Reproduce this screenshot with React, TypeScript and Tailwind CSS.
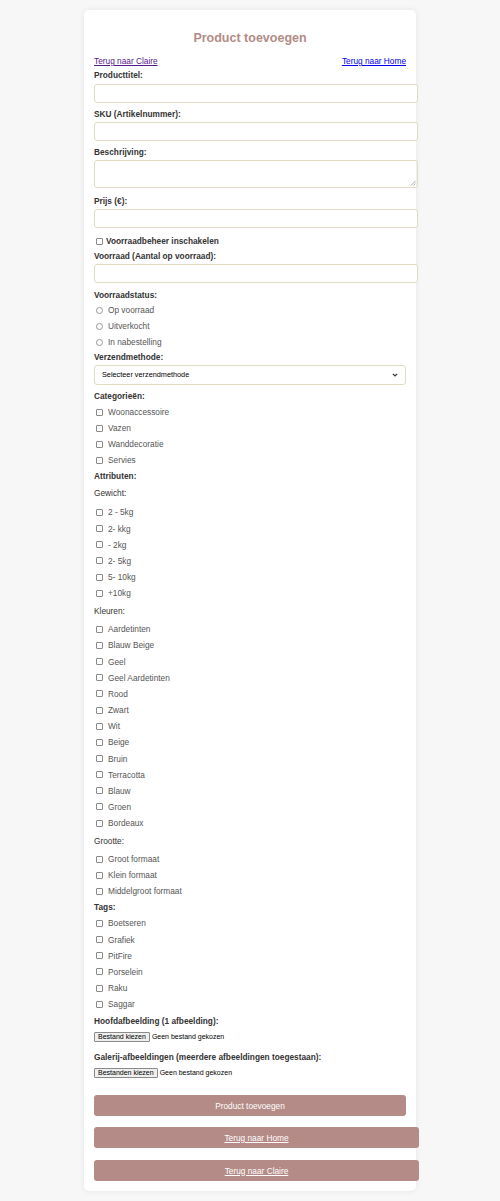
import React from "react";

const categories = ["Woonaccessoire", "Vazen", "Wanddecoratie", "Servies"];
const gewicht = ["2 - 5kg", "2- kkg", "- 2kg", "2- 5kg", "5- 10kg", "+10kg"];
const kleuren = ["Aardetinten", "Blauw Beige", "Geel", "Geel Aardetinten", "Rood", "Zwart", "Wit", "Beige", "Bruin", "Terracotta", "Blauw", "Groen", "Bordeaux"];
const grootte = ["Groot formaat", "Klein formaat", "Middelgroot formaat"];
const tags = ["Boetseren", "Grafiek", "PitFire", "Porselein", "Raku", "Saggar"];
const statussen = ["Op voorraad", "Uitverkocht", "In nabestelling"];

function Label({ children, className = "" }: { children: React.ReactNode; className?: string }) {
  return <label className={"block h-[10px] leading-[10px] text-[8.3px] font-bold text-[#333] " + className}>{children}</label>;
}

function Field({ className = "" }: { className?: string }) {
  return <input type="text" className={"block w-[324px] h-[19px] border border-[#e0ddc2] rounded-[3px] bg-white outline-none " + className} />;
}

function CheckList({ items, className = "" }: { items: string[]; className?: string }) {
  return (
    <div className={"flex flex-col gap-[6.17px] " + className}>
      {items.map((it) => (
        <label key={it} className="flex items-center h-[10px] text-[8.3px] leading-[10px] text-[#555]">
          <span className="ml-[2px] w-[7px] h-[7px] border border-[#8a8a8a] rounded-[1px] bg-white" />
          <span className="ml-[5px]">{it}</span>
        </label>
      ))}
    </div>
  );
}

function FileRow({ button, className = "" }: { button: string; className?: string }) {
  return (
    <div className={"flex items-center h-[10px] text-[7px] text-black " + className}>
      <span className="h-[10px] px-[3px] leading-[8px] border border-[#8a8a8a] rounded-[1px] bg-[#efefef]">{button}</span>
      <span className="ml-[2px]">Geen bestand gekozen</span>
    </div>
  );
}

export default function App() {
  return (
    <div className="min-h-[1201px] bg-[#f7f7f7] pt-[10px] font-[family-name:Liberation_Sans,Arial,sans-serif]">
      <div className="mx-auto w-[332px] bg-white rounded-[5px] shadow-[0_0_6px_rgba(0,0,0,0.08)] px-[10px] pt-[20px] pb-[10px]">
        <h1 className="h-[16px] leading-[16px] text-center text-[12.5px] font-bold text-[#b28c86]">Product toevoegen</h1>

        <div className="mt-[10px] flex justify-between h-[10px] leading-[10px] text-[8.3px]">
          <a href="#" className="underline text-[#551a8b]">Terug naar Claire</a>
          <a href="#" className="underline text-[#0000ee]">Terug naar Home</a>
        </div>

        <Label className="mt-[4px]">Producttitel:</Label>
        <Field className="mt-[4px]" />

        <Label className="mt-[6px]">SKU (Artikelnummer):</Label>
        <Field className="mt-[3px]" />

        <Label className="mt-[6px]">Beschrijving:</Label>
        <div className="relative mt-[3px] w-[324px] h-[28px] border border-[#e0ddc2] rounded-[3px]">
          <svg className="absolute right-[1px] bottom-[1px]" width="6" height="6" viewBox="0 0 6 6">
            <path d="M5.5 1 L1 5.5 M5.5 3.5 L3.5 5.5" stroke="#888" strokeWidth="0.7" />
          </svg>
        </div>

        <Label className="mt-[8px]">Prijs (€):</Label>
        <Field className="mt-[3px]" />

        <label className="mt-[8px] flex items-center h-[10px] text-[8.3px] leading-[10px] font-bold text-[#333]">
          <span className="ml-[2px] w-[7px] h-[7px] border border-[#8a8a8a] rounded-[1px] bg-white" />
          <span className="ml-[3px]">Voorraadbeheer inschakelen</span>
        </label>

        <Label className="mt-[5px]">Voorraad (Aantal op voorraad):</Label>
        <Field className="mt-[3px]" />

        <Label className="mt-[7px]">Voorraadstatus:</Label>
        <div className="mt-[5px] flex flex-col gap-[6px]">
          {statussen.map((s) => (
            <label key={s} className="flex items-center h-[10px] text-[8.3px] leading-[10px] text-[#555]">
              <span className="ml-[2px] w-[7px] h-[7px] border border-[#999] rounded-full bg-white" />
              <span className="ml-[5px]">{s}</span>
            </label>
          ))}
        </div>

        <Label className="mt-[5px]">Verzendmethode:</Label>
        <div className="mt-[3px] flex items-center justify-between w-full h-[20px] border border-[#e0ddc2] rounded-[3px] px-[7px] text-[7.3px] text-black">
          <span>Selecteer verzendmethode</span>
          <svg width="6" height="4" viewBox="0 0 6 4">
            <path d="M0.8 0.8 L3 3 L5.2 0.8" stroke="#333" strokeWidth="1.2" fill="none" />
          </svg>
        </div>

        <Label className="mt-[6px]">Categorieën:</Label>
        <CheckList items={categories} className="mt-[6px]" />

        <Label className="mt-[6px]">Attributen:</Label>
        <div className="mt-[7px] h-[10px] leading-[10px] text-[8.3px] text-[#333]">Gewicht:</div>
        <CheckList items={gewicht} className="mt-[9px]" />

        <div className="mt-[8px] h-[10px] leading-[10px] text-[8.3px] text-[#333]">Kleuren:</div>
        <CheckList items={kleuren} className="mt-[8px]" />

        <div className="mt-[8px] h-[10px] leading-[10px] text-[8.3px] text-[#333]">Grootte:</div>
        <CheckList items={grootte} className="mt-[8px]" />

        <Label className="mt-[6px]">Tags:</Label>
        <CheckList items={tags} className="mt-[6px]" />

        <Label className="mt-[7px]">Hoofdafbeelding (1 afbeelding):</Label>
        <FileRow button="Bestand kiezen" className="mt-[6px]" />

        <Label className="mt-[10px]">Galerij-afbeeldingen (meerdere afbeeldingen toegestaan):</Label>
        <FileRow button="Bestanden kiezen" className="mt-[6px]" />

        <button type="button" className="mt-[17px] block w-full h-[21px] rounded-[3px] bg-[#b48b86] text-white text-[8.3px]">Product toevoegen</button>
        <a href="#" className="mt-[11px] flex items-center justify-center w-[325px] h-[21px] rounded-[3px] bg-[#b48b86] text-white text-[8.3px] underline">Terug naar Home</a>
        <a href="#" className="mt-[12px] flex items-center justify-center w-[325px] h-[21px] rounded-[3px] bg-[#b48b86] text-white text-[8.3px] underline">Terug naar Claire</a>
      </div>
    </div>
  );
}
